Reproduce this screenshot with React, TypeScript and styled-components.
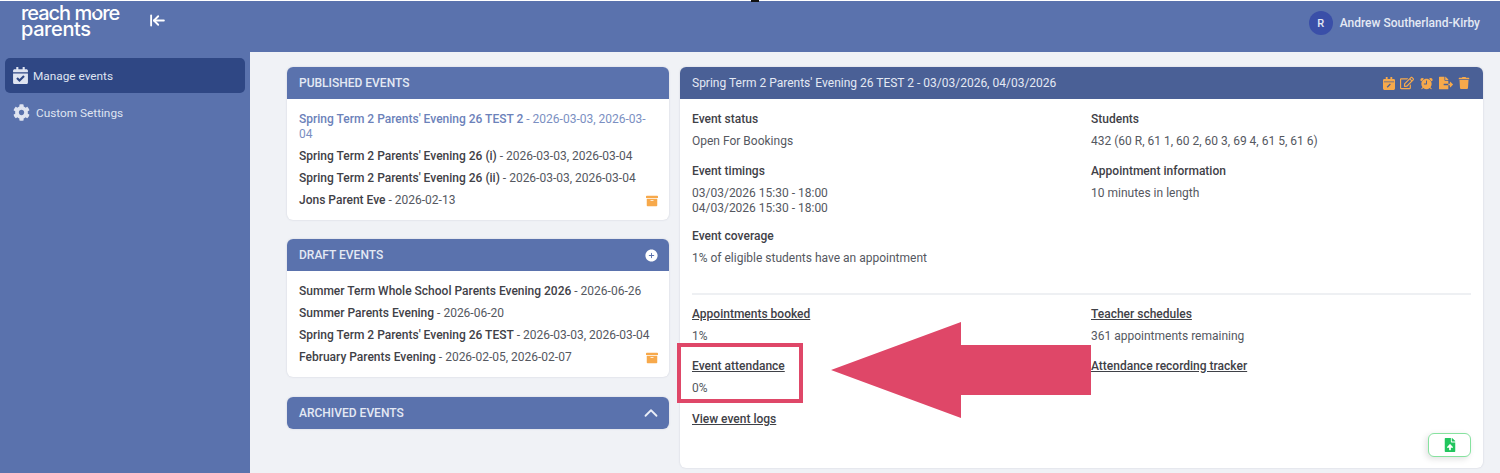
import React from 'react'
import styled, { createGlobalStyle } from 'styled-components'
import { ArrowLeftToLine, ChevronUp } from 'lucide-react'
import {
  FaArchive,
  FaCalendarCheck,
  FaCog,
  FaFileExport,
  FaFileUpload,
  FaRegEdit,
  FaTrash,
} from 'react-icons/fa'
import { IoAddCircle, IoAlarm } from 'react-icons/io5'

const blue = '#5a72ad'
const darkBlue = '#4a6096'
const orange = '#f7a94b'
const red = '#df4768'

const GlobalStyle = createGlobalStyle`
  html, body {
    margin: 0;
    padding: 0;
    height: 473px;
    overflow: hidden;
    background: #f0f2f6;
    font-family: Roboto, "Liberation Sans", sans-serif;
    font-size: 12px;
  }
  * { box-sizing: border-box; }
`

const Page = styled.div`
  position: relative;
  width: 1500px;
  height: 473px;
  display: grid;
  grid-template-columns: 250px 1fr;
  grid-template-rows: 51px 1fr;
  border-top: 1px solid #fff;
`

const TopBar = styled.header`
  grid-column: 1 / 3;
  background: ${blue};
  display: flex;
  align-items: center;
  color: #fff;
  padding-right: 20px;
`

const Logo = styled.div`
  width: 149px;
  margin-top: -12px;
  padding-left: 21px;
  font-family: Inter, sans-serif;
  font-size: 20px;
  font-weight: 500;
  color: #fff;
`

const LogoLine = styled.div<{ $spacing: number }>`
  line-height: 16px;
  letter-spacing: ${(p) => p.$spacing}px;
`

// the o of the logo has a chevron cut out of it
const LogoO = styled.span`
  position: relative;

  &::after {
    content: '';
    position: absolute;
    left: 1px;
    top: 6px;
    border-left: 5px solid ${blue};
    border-top: 3.5px solid transparent;
    border-bottom: 3.5px solid transparent;
  }
`

const Collapse = styled.span`
  display: flex;
  margin-top: -13px;
`

const User = styled.div`
  margin-left: auto;
  display: flex;
  align-items: center;
  gap: 7px;
  margin-top: -7px;
  font-size: 12px;
  font-weight: 500;
  color: #e4e9f4;
`

const Avatar = styled.span`
  width: 24px;
  height: 24px;
  border-radius: 50%;
  background: #3a4fa8;
  display: flex;
  align-items: center;
  justify-content: center;
  font-size: 11px;
  font-weight: 500;
`

const Sidebar = styled.nav`
  background: ${blue};
  padding: 6px 5px 0;
  display: flex;
  flex-direction: column;
  gap: 2px;
`

const NavItem = styled.a<{ $active?: boolean }>`
  height: 35px;
  display: flex;
  align-items: center;
  gap: ${(p) => (p.$active ? '4px' : '6px')};
  padding-left: ${(p) => (p.$active ? '7px' : '8px')};
  border-radius: 5px;
  color: #dfe4f1;
  font-size: 11.8px;
  background: ${(p) => (p.$active ? '#2f4784' : 'transparent')};
`

const Content = styled.main`
  display: grid;
  grid-template-columns: 382px 803px;
  column-gap: 11px;
  align-items: start;
  padding: 15px 0 0 37px;
`

const LeftColumn = styled.div`
  display: flex;
  flex-direction: column;
  gap: 19px;
`

const Card = styled.section`
  background: #fff;
  border-radius: 6px;
  box-shadow: 0 0 2px rgba(60, 70, 100, 0.2);
  overflow: hidden;
`

const ArchivedCard = styled(Card)`
  margin-top: 1px;
`

const CardHeader = styled.div<{ $dark?: boolean }>`
  height: 32px;
  display: flex;
  align-items: center;
  justify-content: space-between;
  padding: 0 12px;
  background: ${(p) => (p.$dark ? darkBlue : blue)};
  color: #e4e9f4;
  font-size: 12px;
  font-weight: ${(p) => (p.$dark ? 400 : 500)};
`

const HeaderAction = styled.span<{ $shift: number }>`
  display: flex;
  margin-right: ${(p) => p.$shift}px;
`

const EventList = styled.ul`
  list-style: none;
  margin: 0;
  padding: 13px 11px 12px 12px;
  display: flex;
  flex-direction: column;
  gap: 7px;
`

const EventRow = styled.li<{ $current?: boolean }>`
  display: flex;
  align-items: center;
  justify-content: space-between;
  line-height: 15px;
  color: ${(p) => (p.$current ? '#7b8fc2' : '#55585f')};
  font-size: 12px;

  b {
    font-weight: 500;
    color: ${(p) => (p.$current ? '#6c82ba' : '#3f4147')};
  }
`

const DetailBody = styled.div`
  height: 369px;
  padding: 13px 12px 0;
  position: relative;
`

const DetailGrid = styled.div`
  display: grid;
  grid-template-columns: 399px 1fr;
`

const Field = styled.div<{ $gap?: number }>`
  margin-bottom: ${(p) => p.$gap ?? 15}px;
`

const FieldTitle = styled.div`
  font-weight: 500;
  line-height: 15px;
  color: #3f4147;
  margin-bottom: 7px;
`

const FieldLink = styled(FieldTitle)`
  text-decoration: underline;
`

const FieldValue = styled.div`
  line-height: 15px;
  color: #55585f;
`

const Divider = styled.hr`
  border: 0;
  border-top: 2px solid #eef0f3;
  margin: 12px 0 12px;
`

const HeaderIcons = styled.span`
  display: flex;
  align-items: center;
  gap: 5px;
  color: ${orange};
  margin-right: 1px;
`

const ExportButton = styled.button`
  position: absolute;
  right: 12px;
  bottom: 11px;
  width: 43px;
  height: 24px;
  background: #fff;
  border: 1.5px solid #86e29f;
  border-radius: 6px;
  box-shadow: -2px 2px 6px rgba(0, 0, 0, 0.12);
  color: #22c55e;
  display: flex;
  align-items: center;
  justify-content: center;
  padding: 0;
`

const Highlight = styled.div`
  position: absolute;
  left: 677px;
  top: 342px;
  width: 126px;
  height: 60px;
  border: 4px solid ${red};
`

const Arrow = styled.svg`
  position: absolute;
  left: 830px;
  top: 320px;
`

const Notch = styled.span`
  position: absolute;
  left: 751px;
  top: -1px;
  width: 8px;
  height: 2px;
  background: #111;
`

const CalendarEditIcon = () => (
  <svg width='12' height='13' viewBox='0 0 13 14'>
    <path
      d='M3 0h2v2h3V0h2v2h1.5A1.5 1.5 0 0 1 13 3.5v9a1.5 1.5 0 0 1-1.5 1.5h-10A1.5 1.5 0 0 1 0 12.5v-9A1.5 1.5 0 0 1 1.5 2H3z'
      fill='currentColor'
    />
    <path d='M1 5.2h11' stroke={darkBlue} strokeWidth='0.8' />
    <path d='M4.5 11l3.5-3.5' stroke={darkBlue} strokeWidth='1.4' />
  </svg>
)

type EventItem = { name: string; dates: string; current?: boolean; archive?: boolean }

const published: EventItem[] = [
  { name: "Spring Term 2 Parents' Evening 26 TEST 2", dates: '2026-03-03, 2026-03-04', current: true },
  { name: "Spring Term 2 Parents' Evening 26 (i)", dates: '2026-03-03, 2026-03-04' },
  { name: "Spring Term 2 Parents' Evening 26 (ii)", dates: '2026-03-03, 2026-03-04' },
  { name: 'Jons Parent Eve', dates: '2026-02-13', archive: true },
]

const drafts: EventItem[] = [
  { name: 'Summer Term Whole School Parents Evening 2026', dates: '2026-06-26' },
  { name: 'Summer Parents Evening', dates: '2026-06-20' },
  { name: "Spring Term 2 Parents' Evening 26 TEST", dates: '2026-03-03, 2026-03-04' },
  { name: 'February Parents Evening', dates: '2026-02-05, 2026-02-07', archive: true },
]

const Events: React.FC<{ items: EventItem[] }> = ({ items }) => (
  <EventList>
    {items.map((e) => (
      <EventRow key={e.name} $current={e.current}>
        <span>
          <b>{e.name}</b> - {e.dates}
        </span>
        {e.archive && <FaArchive size={12} color={orange} />}
      </EventRow>
    ))}
  </EventList>
)

export default function App() {
  return (
    <Page>
      <GlobalStyle />
      <Notch />
      <TopBar>
        <Logo>
          <LogoLine $spacing={-1.03}>
            reach m<LogoO>o</LogoO>re
          </LogoLine>
          <LogoLine $spacing={-0.4}>parents</LogoLine>
        </Logo>
        <Collapse>
          <ArrowLeftToLine size={17} strokeWidth={2.6} />
        </Collapse>
        <User>
          <Avatar>R</Avatar>
          Andrew Southerland-Kirby
        </User>
      </TopBar>
      <Sidebar>
        <NavItem $active>
          <FaCalendarCheck size={17} />
          Manage events
        </NavItem>
        <NavItem>
          <FaCog size={17} />
          Custom Settings
        </NavItem>
      </Sidebar>
      <Content>
        <LeftColumn>
          <Card>
            <CardHeader>PUBLISHED EVENTS</CardHeader>
            <Events items={published} />
          </Card>
          <Card>
            <CardHeader>
              DRAFT EVENTS
              <HeaderAction $shift={-2}>
                <IoAddCircle size={15} color='#fff' />
              </HeaderAction>
            </CardHeader>
            <Events items={drafts} />
          </Card>
          <ArchivedCard>
            <CardHeader>
              ARCHIVED EVENTS
              <HeaderAction $shift={-5}>
                <ChevronUp size={22} strokeWidth={2} color='#e9edf6' />
              </HeaderAction>
            </CardHeader>
          </ArchivedCard>
        </LeftColumn>
        <Card>
          <CardHeader $dark>
            Spring Term 2 Parents' Evening 26 TEST 2 - 03/03/2026, 04/03/2026
            <HeaderIcons>
              <CalendarEditIcon />
              <FaRegEdit size={14} />
              <IoAlarm size={15} />
              <FaFileExport size={14} />
              <FaTrash size={12} />
            </HeaderIcons>
          </CardHeader>
          <DetailBody>
            <DetailGrid>
              <div>
                <Field>
                  <FieldTitle>Event status</FieldTitle>
                  <FieldValue>Open For Bookings</FieldValue>
                </Field>
                <Field $gap={13}>
                  <FieldTitle>Event timings</FieldTitle>
                  <FieldValue>
                    03/03/2026 15:30 - 18:00
                    <br />
                    04/03/2026 15:30 - 18:00
                  </FieldValue>
                </Field>
                <Field>
                  <FieldTitle>Event coverage</FieldTitle>
                  <FieldValue>1% of eligible students have an appointment</FieldValue>
                </Field>
              </div>
              <div>
                <Field>
                  <FieldTitle>Students</FieldTitle>
                  <FieldValue>432 (60 R, 61 1, 60 2, 60 3, 69 4, 61 5, 61 6)</FieldValue>
                </Field>
                <Field>
                  <FieldTitle>Appointment information</FieldTitle>
                  <FieldValue>10 minutes in length</FieldValue>
                </Field>
              </div>
            </DetailGrid>
            <Divider />
            <DetailGrid>
              <div>
                <Field>
                  <FieldLink>Appointments booked</FieldLink>
                  <FieldValue>1%</FieldValue>
                </Field>
                <Field $gap={16}>
                  <FieldLink>Event attendance</FieldLink>
                  <FieldValue>0%</FieldValue>
                </Field>
                <FieldLink>View event logs</FieldLink>
              </div>
              <div>
                <Field>
                  <FieldLink>Teacher schedules</FieldLink>
                  <FieldValue>361 appointments remaining</FieldValue>
                </Field>
                <FieldLink>Attendance recording tracker</FieldLink>
              </div>
            </DetailGrid>
            <ExportButton>
              <FaFileUpload size={14} />
            </ExportButton>
          </DetailBody>
        </Card>
      </Content>
      <Highlight />
      <Arrow width='262' height='98' viewBox='0 0 262 98'>
        <polygon points='1,49 131,1 131,24 261,24 261,74 131,74 131,97' fill={red} />
      </Arrow>
    </Page>
  )
}
